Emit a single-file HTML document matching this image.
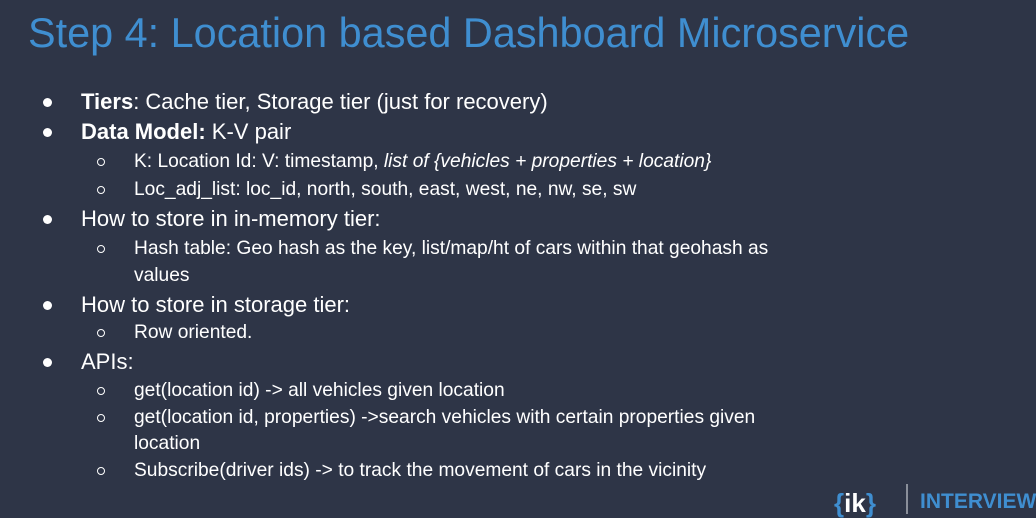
<html><head><style>
body{margin:0;width:1036px;height:514px;background:#2e3547;font-family:"Liberation Sans",sans-serif;overflow:hidden;position:relative}
.t{position:absolute;left:28px;top:10px;font-size:41.4px;color:#3f8ed0;white-space:nowrap}
.l{position:absolute;color:#fff;white-space:nowrap;line-height:22px}
.a{left:81px;font-size:22px}
.b{left:134px;font-size:19.2px}
.d{position:absolute;left:43px;width:9px;height:9px;border-radius:50%;background:#fff}
.c{position:absolute;left:97px;width:6px;height:6px;border-radius:50%;border:1.3px solid #fff}
</style></head><body>
<div class="t">Step 4: Location based Dashboard Microservice</div>

<div class="d" style="top:98px"></div><div class="l a" style="top:91px"><b>Tiers</b>: Cache tier, Storage tier (just for recovery)</div>
<div class="d" style="top:128px"></div><div class="l a" style="top:121px"><b>Data Model:</b> K-V pair</div>
<div class="c" style="top:158px"></div><div class="l b" style="top:151px">K: Location Id: V: timestamp, <i>list of {vehicles + properties + location}</i></div>
<div class="c" style="top:186px"></div><div class="l b" style="top:179px">Loc_adj_list: loc_id, north, south, east, west, ne, nw, se, sw</div>
<div class="d" style="top:215px"></div><div class="l a" style="top:208px">How to store in in-memory tier:</div>
<div class="c" style="top:245px"></div><div class="l b" style="top:238px">Hash table: Geo hash as the key, list/map/ht of cars within that geohash as</div>
<div class="l b" style="top:265px">values</div>
<div class="d" style="top:301px"></div><div class="l a" style="top:294px">How to store in storage tier:</div>
<div class="c" style="top:329px"></div><div class="l b" style="top:322px">Row oriented.</div>
<div class="d" style="top:358px"></div><div class="l a" style="top:351px">APIs:</div>
<div class="c" style="top:387px"></div><div class="l b" style="top:380px">get(location id) -&gt; all vehicles given location</div>
<div class="c" style="top:414px"></div><div class="l b" style="top:407px">get(location id, properties) -&gt;search vehicles with certain properties given</div>
<div class="l b" style="top:433px">location</div>
<div class="c" style="top:467px"></div><div class="l b" style="top:460px">Subscribe(driver ids) -&gt; to track the movement of cars in the vicinity</div>

<div style="position:absolute;left:834px;top:488px;color:#3f8ed0;font-size:26px;font-weight:bold;line-height:30px">{<span style="color:#fff">ik</span>}</div>
<div style="position:absolute;left:906px;top:484px;width:2px;height:30px;background:#8a8f9a"></div>
<div style="position:absolute;left:920px;top:490px;color:#3f8ed0;font-size:21px;font-weight:bold;line-height:24px">INTERVIEW</div>
</body></html>
